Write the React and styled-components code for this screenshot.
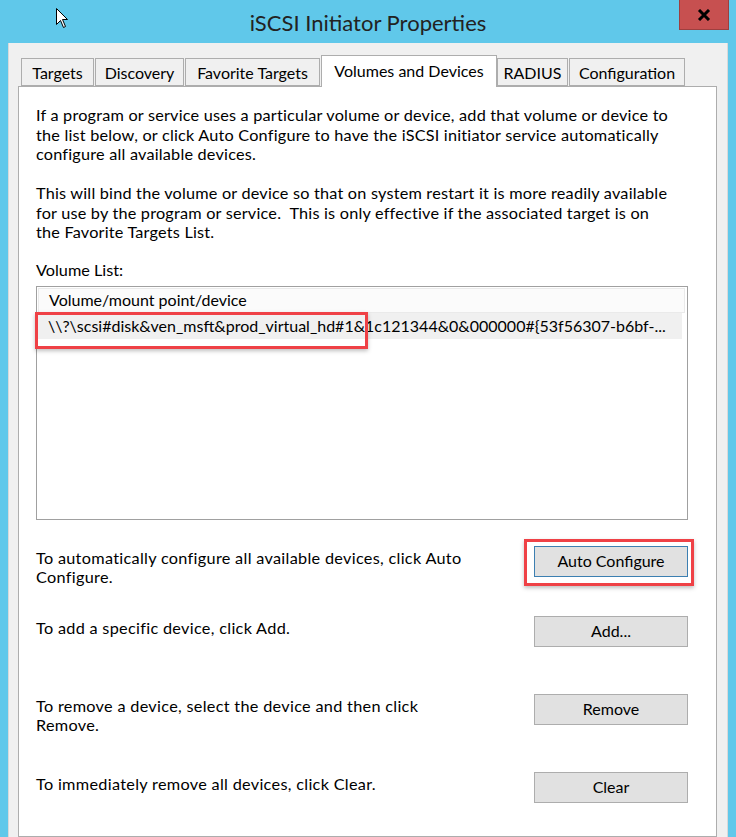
import styled, { createGlobalStyle } from "styled-components";

const GlobalStyle = createGlobalStyle`
  html, body {
    margin: 0;
    padding: 0;
    background: #60c8ea;
  }
  body {
    font-family: Lato, "Noto Sans", sans-serif;
    color: #000;
  }
`;

const Window = styled.div`
  width: 736px;
  height: 837px;
  overflow: hidden;
  position: relative;
  display: flex;
  flex-direction: column;
`;

const TitleBar = styled.div`
  flex-shrink: 0;
  height: 43px;
  display: grid;
  grid-template-columns: 1fr auto 1fr;
  align-items: center;
`;

const Title = styled.div`
  grid-column: 2;
  font-size: 22px;
  color: #222;
  padding-top: 1px;
`;

const CloseButton = styled.div`
  grid-column: 3;
  justify-self: end;
  align-self: start;
  width: 48px;
  height: 29px;
  margin-right: 7px;
  background: #c75050;
  border: 1px solid #9d3f3f;
  border-top: none;
  display: flex;
  align-items: center;
  justify-content: center;
`;

const Cursor = styled.svg`
  position: absolute;
  left: 56px;
  top: 8px;
`;

const Dialog = styled.div`
  flex: 1;
  min-height: 0;
  margin: 0 8px;
  background: #f0f0f0;
  border-left: 1px solid #d9d9d9;
  border-right: 1px solid #d9d9d9;
  padding: 12px 10px 0 9px;
  display: flex;
  flex-direction: column;
`;

const TabStrip = styled.div`
  flex-shrink: 0;
  display: flex;
  align-items: flex-end;
  padding-left: 3px;
  height: 31px;
  position: relative;
  z-index: 1;
`;

const Tab = styled.div`
  box-sizing: border-box;
  width: ${(p) => p.$w}px;
  height: ${(p) => (p.$active ? 32 : 28)}px;
  margin: ${(p) => (p.$active ? "0 -1px -1px" : "0")};
  background: ${(p) => (p.$active ? "#fff" : "#f0f0f0")};
  border: 1px solid #adadad;
  border-bottom: ${(p) => (p.$active ? "none" : "1px solid #adadad")};
  font-size: 16px;
  line-height: 1;
  display: flex;
  align-items: ${(p) => (p.$active ? "flex-start" : "center")};
  padding-top: ${(p) => (p.$active ? "7px" : "1px")};
  justify-content: center;
  white-space: nowrap;
  & + & {
    margin-left: ${(p) => (p.$active ? "-1px" : "1px")};
  }
`;

const Panel = styled.div`
  flex: 1;
  min-height: 0;
  background: #fff;
  border: 1px solid #adadad;
  padding: 18px 28px 0 17px;
  font-size: 16.25px;
  line-height: 19.5px;
`;

const Para = styled.p`
  margin: 0 0 19.5px;
  white-space: nowrap;
  letter-spacing: 0.2px;
`;

const Label = styled.div`
  margin-top: -1px;
  margin-bottom: 6px;
`;

const ListBox = styled.div`
  position: relative;
  height: 234px;
  box-sizing: border-box;
  border: 1px solid #a0a0a0;
  padding: 1px 2px 0 1px;
  font-size: 16px;
`;

const ListHeader = styled.div`
  height: 25px;
  box-sizing: border-box;
  background: #fbfbfb;
  border: 1px solid #eaeaea;
  padding-left: 10px;
  display: flex;
  align-items: center;
`;

const ListRow = styled.div`
  height: 26px;
  margin-right: 3px;
  background: #f0f0f0;
  padding-left: 10px;
  display: flex;
  align-items: center;
  white-space: nowrap;
  overflow: hidden;
`;

const Actions = styled.div`
  margin-top: 26px;
  display: flex;
  flex-direction: column;
`;

const ActionRow = styled.div`
  height: ${(p) => p.$h}px;
  display: grid;
  grid-template-columns: 1fr 154px;
  column-gap: 20px;
  align-items: start;
`;

const ActionText = styled.div`
  padding-top: 2px;
  letter-spacing: 0.3px;
`;

const ButtonWrap = styled.div`
  position: relative;
`;

const Button = styled.div`
  box-sizing: border-box;
  height: 31px;
  background: #e1e1e1;
  border: 1px solid ${(p) => (p.$focus ? "#3c7fb1" : "#adadad")};
  display: flex;
  align-items: center;
  justify-content: center;
  font-size: 16px;
`;

const Highlight = styled.div`
  position: absolute;
  pointer-events: none;
  border: 3px solid #ef4146;
  box-shadow: 0 2px 4px rgba(0, 0, 0, 0.25);
  left: ${(p) => p.$l}px;
  top: ${(p) => p.$t}px;
  width: ${(p) => p.$w}px;
  height: ${(p) => p.$h}px;
  box-sizing: border-box;
`;

const tabs = [
  ["Targets", 73],
  ["Discovery", 89],
  ["Favorite Targets", 135],
  ["Volumes and Devices", 176],
  ["RADIUS", 71],
  ["Configuration", 116],
];

export default function App() {
  return (
    <>
      <GlobalStyle />
      <Window>
        <TitleBar>
          <Title>iSCSI Initiator Properties</Title>
          <CloseButton>
            <svg width="14" height="12" viewBox="0 0 14 12">
              <path d="M2 1 L12 11 M12 1 L2 11" stroke="#000" strokeWidth="3" />
            </svg>
          </CloseButton>
        </TitleBar>
        <Cursor width="13" height="21" viewBox="0 0 13 21">
          <path
            d="M0.5 0.5 L0.5 16.5 L4.5 12.5 L7.5 19.5 L9.5 18.5 L6.5 11.5 L11.5 11.5 Z"
            fill="#fff"
            stroke="#000"
            strokeWidth="1"
          />
        </Cursor>
        <Dialog>
          <TabStrip>
            {tabs.map(([name, w]) => (
              <Tab key={name} $w={w} $active={name === "Volumes and Devices"}>
                {name}
              </Tab>
            ))}
          </TabStrip>
          <Panel>
            <Para>
              If a program or service uses a particular volume or device, add that volume or device to
              <br />
              the list below, or click Auto Configure to have the iSCSI initiator service automatically
              <br />
              configure all available devices.
            </Para>
            <Para>
              This will bind the volume or device so that on system restart it is more readily available
              <br />
              for use by the program or service.&nbsp; This is only effective if the associated target is on
              <br />
              the Favorite Targets List.
            </Para>
            <Label>Volume List:</Label>
            <ListBox>
              <ListHeader>Volume/mount point/device</ListHeader>
              <ListRow>
                \\?\scsi#disk&amp;ven_msft&amp;prod_virtual_hd#1&amp;1c121344&amp;0&amp;000000#{"{"}53f56307-b6bf-...
              </ListRow>
              <Highlight $l={-2} $t={25} $w={333} $h={37} />
            </ListBox>
            <Actions>
              <ActionRow $h={70}>
                <ActionText>
                  To automatically configure all available devices, click Auto
                  <br />
                  Configure.
                </ActionText>
                <ButtonWrap>
                  <Button $focus>Auto Configure</Button>
                  <Highlight $l={-10} $t={-7} $w={170} $h={47} />
                </ButtonWrap>
              </ActionRow>
              <ActionRow $h={78}>
                <ActionText>To add a specific device, click Add.</ActionText>
                <Button>Add...</Button>
              </ActionRow>
              <ActionRow $h={78}>
                <ActionText>
                  To remove a device, select the device and then click
                  <br />
                  Remove.
                </ActionText>
                <Button>Remove</Button>
              </ActionRow>
              <ActionRow $h={78}>
                <ActionText>To immediately remove all devices, click Clear.</ActionText>
                <Button>Clear</Button>
              </ActionRow>
            </Actions>
          </Panel>
        </Dialog>
      </Window>
    </>
  );
}
